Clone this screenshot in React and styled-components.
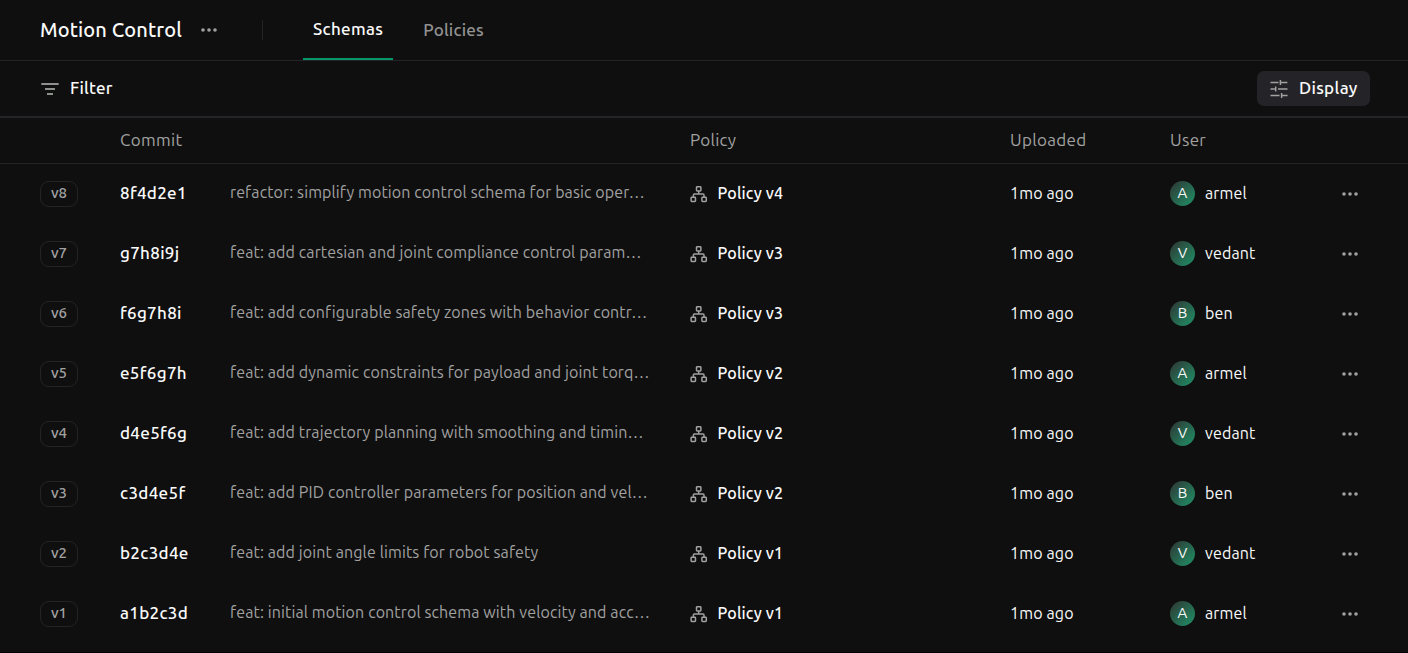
import React from "react";
import styled, { createGlobalStyle } from "styled-components";

const Global = createGlobalStyle`
  * { box-sizing: border-box; }
  body { margin: 0; background: #0f0f0f; font-family: Ubuntu, "Noto Sans", sans-serif; color: #fafafa; }
`;

const Page = styled.div`
  height: 653px;
  overflow: hidden;
  border-bottom: 1px solid #000;
`;

const Text = styled.span`
  font-size: ${(p) => p.$size || 16}px;
  font-weight: ${(p) => p.$weight || 400};
  color: ${(p) => p.$color || "#fafafa"};
  letter-spacing: ${(p) => p.$track || 0}px;
  line-height: 24px;
  white-space: nowrap;
`;

const Label = styled(Text).attrs((p) => ({ $size: 17, $track: p.$track ?? 0.32 }))``;

const Hash = styled(Label)`
  padding-bottom: 1px;
`;

const Value = styled(Text).attrs({ $track: 0.15 })`
  padding-bottom: 1px;
`;

const Message = styled(Text).attrs({ $track: 0.115 })`
  padding-bottom: 3px;
`;

const Header = styled.header`
  display: flex;
  align-items: center;
  height: 61px;
  padding-left: 40px;
  border-bottom: 1px solid #242428;
`;

const Title = styled.h1`
  margin: 0;
  width: 160px;
  padding-bottom: 1px;
  font-size: 20px;
  font-weight: 500;
  letter-spacing: 0.14px;
  white-space: nowrap;
`;

const Divider = styled.div`
  width: 1px;
  height: 20px;
  margin: 0 40px 0 44px;
  background: #242428;
`;

const Tab = styled.div`
  display: flex;
  align-items: center;
  height: 60px;
  padding: ${(p) => (p.$active ? "0 10px" : "2px 10px 0")};
  margin-right: 20px;
  border-bottom: 2px solid ${(p) => (p.$active ? "#059669" : "transparent")};
`;

const Toolbar = styled.div`
  display: flex;
  align-items: center;
  justify-content: space-between;
  height: 57px;
  padding: 0 38px 0 40px;
  border-bottom: 2px solid #242428;
`;

const FilterButton = styled.div`
  display: flex;
  align-items: center;
  gap: 10px;
  padding-bottom: 1px;

  svg { margin-top: 1px; }
`;

const DisplayButton = styled.div`
  display: flex;
  align-items: center;
  gap: 10px;
  width: 113px;
  height: 35px;
  padding: 0 0 1px 12px;
  border-radius: 7px;
  background: #242428;

  svg { margin-top: 1px; }
`;

const Row = styled.div`
  display: grid;
  grid-template-columns: 80px 110px 460px 320px 160px 171px 1fr;
  align-items: center;
  height: 60px;
  padding: 0 0 1px 40px;

  svg { margin-top: 1px; }
`;

const HeadRow = styled(Row)`
  height: 46px;
  padding-bottom: 2px;
  border-bottom: 1px solid #242428;
`;

const Badge = styled.div`
  display: flex;
  align-items: center;
  justify-content: center;
  width: 38px;
  height: 26px;
  margin-top: 1px;
  padding-bottom: 2px;
  border: 1px solid #242428;
  border-radius: 9px;
`;

const Cell = styled.div`
  display: flex;
  align-items: center;
  gap: ${(p) => p.$gap || 0}px;
`;

const Avatar = styled.div`
  display: flex;
  align-items: center;
  justify-content: center;
  width: 25px;
  height: 25px;
  padding-bottom: 1px;
  border-radius: 50%;
  background: linear-gradient(135deg, #2f3533, #1f9268);
`;

const Dots = () => (
  <svg width="18" height="6" viewBox="0 0 18 6" fill="#a1a1a1">
    <circle cx="3" cy="3" r="1.8" />
    <circle cx="9" cy="3" r="1.8" />
    <circle cx="15" cy="3" r="1.8" />
  </svg>
);

const FilterIcon = () => (
  <svg width="20" height="20" viewBox="0 0 20 20" fill="#8e908e">
    <path d="M1.3 4h17.4v2H1.3zM5 9h10v2H5zM7 14h6v2H7z" />
  </svg>
);

const TuneIcon = () => (
  <svg width="20" height="20" viewBox="0 0 20 20" fill="none" stroke="#a1a1a1" strokeWidth="1.5">
    <path d="M1.5 3.5h8M11.4 1v5M11.4 3.5h7M1.5 10h5.2M6.7 7.5v5M9 10h9.5M1.5 16.5h9M12.6 14v5M12.6 16.5h6" />
  </svg>
);

const PolicyIcon = () => (
  <svg width="18" height="18" viewBox="0 0 18 18" fill="none" stroke="#a1a1a1" strokeWidth="1.5">
    <rect x="6.5" y="1.7" width="4.4" height="4.2" rx="0.7" />
    <rect x="1.1" y="12.2" width="4.4" height="4.2" rx="0.7" />
    <rect x="11.9" y="12.2" width="4.4" height="4.2" rx="0.7" />
    <path d="M8.7 6v3M3.4 12v-2q0-.9 1-.9h8.6q1 0 1 .9v2" />
  </svg>
);

const rows = [
  ["v8", "8f4d2e1", "refactor: simplify motion control schema for basic oper…", "Policy v4", "armel"],
  ["v7", "g7h8i9j", "feat: add cartesian and joint compliance control param…", "Policy v3", "vedant"],
  ["v6", "f6g7h8i", "feat: add configurable safety zones with behavior contr…", "Policy v3", "ben"],
  ["v5", "e5f6g7h", "feat: add dynamic constraints for payload and joint torq…", "Policy v2", "armel"],
  ["v4", "d4e5f6g", "feat: add trajectory planning with smoothing and timin…", "Policy v2", "vedant"],
  ["v3", "c3d4e5f", "feat: add PID controller parameters for position and vel…", "Policy v2", "ben"],
  ["v2", "b2c3d4e", "feat: add joint angle limits for robot safety", "Policy v1", "vedant"],
  ["v1", "a1b2c3d", "feat: initial motion control schema with velocity and acc…", "Policy v1", "armel"],
];

export default function App() {
  return (
    <Page>
      <Global />
      <Header>
        <Title>Motion Control</Title>
        <Dots />
        <Divider />
        <Tab $active><Label $weight={500}>Schemas</Label></Tab>
        <Tab><Label $weight={500} $track={0.2} $color="#929292">Policies</Label></Tab>
      </Header>
      <Toolbar>
        <FilterButton><FilterIcon /><Label $weight={500} $track={0.2}>Filter</Label></FilterButton>
        <DisplayButton><TuneIcon /><Label $weight={500} $track={0.3}>Display</Label></DisplayButton>
      </Toolbar>
      <HeadRow>
        <span />
        <Label $color="#a1a1a1">Commit</Label>
        <span />
        <Label $color="#a1a1a1" $track={0.25}>Policy</Label>
        <Label $color="#a1a1a1">Uploaded</Label>
        <Label $color="#a1a1a1">User</Label>
      </HeadRow>
      {rows.map(([v, hash, msg, policy, user]) => (
        <Row key={v}>
          <Badge><Text $size={15} $weight={500} $color="#a1a1a1">{v}</Text></Badge>
          <Hash $weight={500}>{hash}</Hash>
          <Message $color="#a1a1a1">{msg}</Message>
          <Cell $gap={9.5}><PolicyIcon /><Value $weight={500}>{policy}</Value></Cell>
          <Value>1mo ago</Value>
          <Cell $gap={10}><Avatar><Text $size={15}>{user[0].toUpperCase()}</Text></Avatar><Value>{user}</Value></Cell>
          <Dots />
        </Row>
      ))}
    </Page>
  );
}
